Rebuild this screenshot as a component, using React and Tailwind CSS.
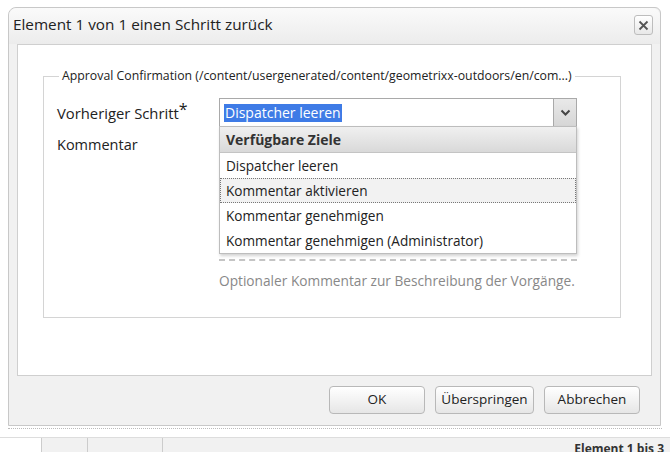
import React from 'react';

const font = { fontFamily: '"Open Sans", "Noto Sans", sans-serif' };

function Button({ children, width }) {
    return (
        <button
            className={`${width} h-[28px] rounded-[4px] border border-[#b8b8b8] bg-gradient-to-b from-[#ffffff] to-[#e6e6e6] text-[13.5px] text-[#222] shadow-[inset_0_1px_0_#fff]`}
        >
            {children}
        </button>
    );
}

export default function App() {
    const items = [
        'Dispatcher leeren',
        'Kommentar aktivieren',
        'Kommentar genehmigen',
        'Kommentar genehmigen (Administrator)',
    ];

    return (
        <div className="w-[670px] h-[452px] bg-white overflow-hidden relative" style={font}>
            {/* dialog */}
            <div className="ml-[8px] mt-[7px] w-[653px] h-[419px] border border-[#c8c8c8] rounded-tl-[8px] rounded-tr-[6px] bg-[#f1f1f1] flex flex-col">
                {/* title bar */}
                <div className="h-[36px] flex items-start justify-between pt-[5px] pl-[4px] pr-[7px] bg-gradient-to-b from-[#fafafa] to-[#ececec] rounded-t-[8px]">
                    <span className="text-[15.3px] leading-[22px] text-[#222]">Element 1 von 1 einen Schritt zurück</span>
                    <button className="mt-[2px] w-[19px] h-[20px] rounded-[3px] border border-[#bdbdbd] bg-gradient-to-b from-white to-[#e8e8e8] flex items-center justify-center">
                        <svg width="11" height="11" viewBox="0 0 11 11">
                            <path d="M1.5 1.5 L9.5 9.5 M9.5 1.5 L1.5 9.5" stroke="#555" strokeWidth="1.8" />
                        </svg>
                    </button>
                </div>

                {/* content */}
                <div className="mx-[8px] h-[332px] bg-white border border-[#cfcfcf] pt-[22px] pl-[25px] pr-[30px]">
                    <fieldset className="h-[251px] border border-[#d4d4d4] px-[13px]">
                        <legend className="px-[3px] ml-[2px] text-[12.3px] text-[#222]">
                            Approval Confirmation (/content/usergenerated/content/geometrixx-outdoors/en/com...)
                        </legend>
                        <div className="flex items-center mt-[13px]">
                            <span className="w-[162px] text-[14.8px] text-[#222]">
                                Vorheriger Schritt<span className="align-top text-[16px] leading-[14px]">*</span>
                            </span>
                            <div className="relative w-[358px] h-[29px] border border-[#a9a9a9] flex">
                                <div className="flex-1 flex items-center pl-[4px]">
                                    <span className="bg-[#3e7be6] text-white text-[14px] leading-[18px] px-[1px]">Dispatcher leeren</span>
                                </div>
                                <div className="w-[23px] border-l border-[#a9a9a9] bg-gradient-to-b from-[#e9e9e9] to-[#d6d6d6] flex items-center justify-center">
                                    <svg width="11" height="8" viewBox="0 0 11 8">
                                        <path d="M1.5 1.5 L5.5 5.5 L9.5 1.5" stroke="#444" strokeWidth="2" fill="none" />
                                    </svg>
                                </div>
                                {/* open list */}
                                <div className="absolute -left-px top-full w-[358px] bg-white border border-[#bdbdbd] shadow-[1px_2px_3px_rgba(0,0,0,0.18)] z-10">
                                    <div className="h-[26px] flex items-center px-[6px] bg-gradient-to-b from-[#f0f0f0] to-[#d9d9d9] border-b border-[#c4c4c4] text-[14px] font-bold text-[#333]">
                                        Verfügbare Ziele
                                    </div>
                                    {items.map((item, i) => (
                                        <div
                                            key={item}
                                            className={`h-[25px] flex items-center px-[5px] text-[13.6px] text-[#222] ${i === 1 ? 'bg-[#f2f2f2] border border-dotted border-[#777]' : 'border border-transparent'}`}
                                        >
                                            {item}
                                        </div>
                                    ))}
                                </div>
                            </div>
                        </div>
                        <div className="flex mt-[7px]">
                            <span className="w-[162px] text-[14.5px] text-[#222]">Kommentar</span>
                            <div className="w-[358px]">
                                {/* textarea behind the list */}
                                <div className="h-[127px] border-b-2 border-dashed border-[#c4c4c4]"></div>
                                <div className="mt-[10px] text-[13.7px] text-[#888]">
                                    Optionaler Kommentar zur Beschreibung der Vorgänge.
                                </div>
                            </div>
                        </div>
                    </fieldset>
                </div>

                {/* footer */}
                <div className="flex-1 flex items-center justify-end gap-[10px] pr-[20px] pb-[2px]">
                    <Button width="w-[96px]">OK</Button>
                    <Button width="w-[99px]">Überspringen</Button>
                    <Button width="w-[96px]">Abbrechen</Button>
                </div>
            </div>
            <div className="mx-[8px] mt-[2px] border-t border-dotted border-[#bbb]"></div>

            {/* toolbar below */}
            <div className="absolute left-0 top-[437px] w-[670px] h-[15px] bg-[#f1f1f1] border-t border-[#ddd] flex text-[12px] text-[#333]">
                <div className="w-[42px] h-full bg-white border-r border-[#ccc]"></div>
                <div className="w-[46px] h-full border-r border-[#ccc]"></div>
                <div className="w-[75px] h-full border-r border-[#ccc]"></div>
                <div className="flex-1"></div>
                <span className="pr-[6px] pt-[4px] leading-[14px] font-bold">Element 1 bis 3</span>
            </div>
        </div>
    );
}
